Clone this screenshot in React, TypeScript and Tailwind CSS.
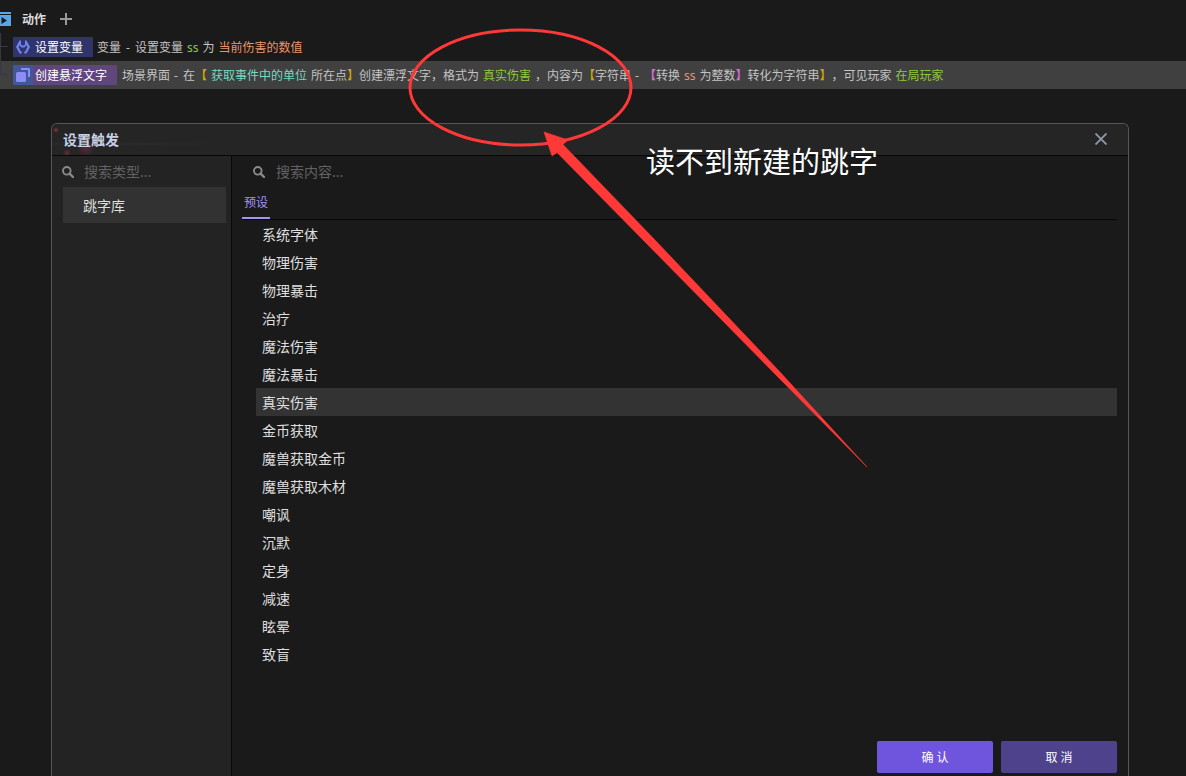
import React, { useState } from 'react';
import { clsx } from 'clsx';

const categories = ['跳字库'];

const presets = [
  '系统字体',
  '物理伤害',
  '物理暴击',
  '治疗',
  '魔法伤害',
  '魔法暴击',
  '真实伤害',
  '金币获取',
  '魔兽获取金币',
  '魔兽获取木材',
  '嘲讽',
  '沉默',
  '定身',
  '减速',
  '眩晕',
  '致盲',
];

function SearchIcon() {
  return (
    <svg viewBox="0 0 12 12" className="h-3 w-3 shrink-0" fill="none" stroke="#8a8a8a" aria-hidden="true">
      <circle cx="4.8" cy="4.8" r="3.8" strokeWidth="1.9" />
      <path d="M7.6 7.6 11 11" strokeWidth="2.4" strokeLinecap="round" />
    </svg>
  );
}

function Branch({ last }: { last?: boolean }) {
  return (
    <span className="flex w-[13px] shrink-0 flex-col self-stretch">
      <span className="h-[14px] w-2 border-b border-l border-[#343a40]" />
      <span className={clsx('flex-1', !last && 'border-l border-[#343a40]')} />
    </span>
  );
}

function ActionHeader() {
  return (
    <div className="flex h-[33px] items-center pt-[5px]">
      <svg viewBox="0 0 11 14" className="h-[14px] w-[11px]" aria-hidden="true">
        <path d="M0 0h11v2H0zM0 3h11v11H0z" fill="#58a6e8" />
        <path d="M1.5 5v7L7 8.5z" fill="#1a1a1a" />
      </svg>
      <h2 className="ml-[11px] pt-[2px] text-xs font-bold text-[#dcdcdc]">动作</h2>
      <button type="button" aria-label="添加动作" className="ml-[14px]">
        <svg viewBox="0 0 12 12" className="h-3 w-3" aria-hidden="true">
          <path d="M6 0v12M0 6h12" stroke="#9a9a9a" strokeWidth="2" />
        </svg>
      </button>
    </div>
  );
}

function SetVariableRow() {
  return (
    <div className="flex h-7 items-center whitespace-nowrap text-xs text-[#c4c4c4]">
      <Branch />
      <span className="flex h-5 items-center bg-[#2f3569] pr-[10px] text-white">
        <svg viewBox="0 0 16 16" className="ml-[2px] mr-1 h-4 w-4" fill="#7283f0" aria-hidden="true">
          <path d="M4.500 1.500H6v4l1 1h2l1-1v-4h1.500L15 8l-3.500 6.500H9.300v-2h.9L12.400 8l-1-1.800L9.500 8.500h-3L4.600 6.200 3.600 8l2.200 4.500h.9v2H4.500L1 8z" />
        </svg>
        <span className="pt-[2px]">设置变量</span>
      </span>
      <span className="flex pt-[2px]">
        <span className="ml-1">变量</span>
        <span className="mx-[5px]">-</span>
        <span>设置变量</span>
        <span className="mx-1 text-[#8fc93a]">ss</span>
        <span>为</span>
        <span className="ml-1 text-[#e8956a]">当前伤害的数值</span>
      </span>
    </div>
  );
}

function FloatingTextRow() {
  return (
    <div className="flex h-7 items-center whitespace-nowrap bg-[#404040] text-xs text-[#c4c4c4]">
      <Branch last />
      <span className="flex h-5 items-center bg-[#60457f] pr-[10px] text-white">
        <span className="mr-[2px] flex h-5 w-5 items-center justify-center bg-[#43569a]">
          <svg viewBox="0 0 14 14" className="h-[14px] w-[14px]" fill="#8c8cf5" aria-hidden="true">
            <rect x="0" y="4" width="10" height="10" rx="1.5" />
            <path d="M5 0h7.500A1.500 1.500 0 0 1 14 1.500V9h-2V2H5z" />
          </svg>
        </span>
        <span className="pt-[2px]">创建悬浮文字</span>
      </span>
      <span className="flex pt-[2px]">
        <span className="ml-[5px]">场景界面</span>
        <span className="ml-1 mr-[5px]">-</span>
        <span>在</span>
        <span className="font-bold text-[#c9a800]">【</span>
        <span className="mx-1 text-[#6fdcc4]">获取事件中的单位</span>
        <span>所在点</span>
        <span className="font-bold text-[#c9a800]">】</span>
        <span>创建漂浮文字，格式为</span>
        <span className="mx-1 text-[#8fc93a]">真实伤害</span>
        <span>，内容为</span>
        <span className="font-bold text-[#c9a800]">【</span>
        <span>字符串</span>
        <span className="ml-1 mr-[5px]">-</span>
        <span className="font-bold text-[#d670d6]">【</span>
        <span>转换</span>
        <span className="mx-1 text-[#e8956a]">ss</span>
        <span>为整数</span>
        <span className="font-bold text-[#d670d6]">】</span>
        <span>转化为字符串</span>
        <span className="font-bold text-[#c9a800]">】</span>
        <span>，可见玩家</span>
        <span className="ml-1 text-[#8fc93a]">在局玩家</span>
      </span>
    </div>
  );
}

function DialogHeader() {
  return (
    <header className="flex h-8 items-center justify-between rounded-t-md border-b border-[#080808] bg-[#252525] bg-[radial-gradient(circle_at_4px_6px,#8a3448_0,transparent_3px),radial-gradient(circle_at_15px_29px,#6b2b3c_0,transparent_4px),radial-gradient(circle_at_34px_24px,#57283a_0,transparent_9px),radial-gradient(ellipse_at_60px_20px,#2b2a30_0,transparent_110px)] pl-[11px] pr-[21px]">
      <h1 className="text-sm font-bold text-[#c8d0e6]">设置触发</h1>
      <button type="button" aria-label="关闭" className="mb-[2px]">
        <svg viewBox="0 0 12 12" className="h-3 w-3" aria-hidden="true">
          <path d="M.5.5l11 11M11.5.5l-11 11" stroke="#9299ad" strokeWidth="1.8" />
        </svg>
      </button>
    </header>
  );
}

function PickerDialog() {
  const [category, setCategory] = useState('跳字库');
  const [selected, setSelected] = useState('真实伤害');

  return (
    <section
      role="dialog"
      aria-label="设置触发"
      className="ml-[51px] mr-[57px] mt-[34px] flex flex-1 flex-col rounded-t-md border border-b-0 border-[#555]"
    >
      <DialogHeader />
      <div className="flex flex-1">
        <aside className="w-[180px] shrink-0 border-r border-[#080808] bg-[#232323]">
          <label className="flex h-[31px] items-center gap-[10px] pl-[10px]">
            <SearchIcon />
            <input
              aria-label="搜索类型"
              placeholder="搜索类型..."
              className="w-full min-w-0 bg-transparent text-sm outline-none placeholder:text-[#626262]"
            />
          </label>
          <ul className="pl-[11px] pr-[5px]">
            {categories.map((name) => (
              <li key={name}>
                <button
                  type="button"
                  onClick={() => setCategory(name)}
                  className={clsx('h-9 w-full pl-5 pt-[2px] text-left text-sm text-[#dedede]', name === category && 'bg-[#323232]')}
                >
                  {name}
                </button>
              </li>
            ))}
          </ul>
        </aside>

        <div className="flex flex-1 flex-col pl-[10px] pr-[11px]">
          <label className="flex h-8 items-center gap-[11px] pl-[11px]">
            <SearchIcon />
            <input
              aria-label="搜索内容"
              placeholder="搜索内容..."
              className="w-full min-w-0 bg-transparent text-sm outline-none placeholder:text-[#626262]"
            />
          </label>
          <div role="tablist" className="flex h-8 border-b border-[#080808]">
            <button
              type="button"
              role="tab"
              aria-selected="true"
              className="h-[31px] border-b-2 border-[#a594f5] px-[2px] text-xs text-[#a594f5]"
            >
              预设
            </button>
          </div>
          <ul className="pl-[14px]">
            {presets.map((name) => (
              <li key={name}>
                <button
                  type="button"
                  onClick={() => setSelected(name)}
                  className={clsx('h-7 w-full pl-[6px] pt-[2px] text-left text-sm text-[#dedede]', name === selected && 'bg-[#333333]')}
                >
                  {name}
                </button>
              </li>
            ))}
          </ul>
          <footer className="mt-auto flex justify-end gap-2 pb-[3px]">
            <button type="button" className="h-8 w-[116px] rounded-xs bg-[#6f55dd] pt-[2px] text-xs text-white">
              确 认
            </button>
            <button type="button" className="h-8 w-[116px] rounded-xs bg-[#4f428c] pt-[2px] text-xs text-white">
              取 消
            </button>
          </footer>
        </div>
      </div>
    </section>
  );
}

// Hand-drawn markup that sits over the editor
function Annotation() {
  return (
    <div className="pointer-events-none absolute left-0 top-0">
      <svg width="880" height="480" viewBox="0 0 880 480" aria-hidden="true">
        <ellipse cx="520.5" cy="87.5" rx="110.5" ry="57.5" fill="none" stroke="#ff3838" strokeWidth="3" />
        <path
          d="M544 132l24 8-5 4.500L655 240 780 372 867 467 775 374 648 245 557 152.500l-5 3.500z"
          fill="#ff3838"
          stroke="#ff3838"
          strokeWidth="0.6"
        />
      </svg>
      <p className="absolute left-[646px] top-[144px] whitespace-nowrap text-[29px] leading-9 text-white">读不到新建的跳字</p>
    </div>
  );
}

export default function App() {
  return (
    <main className="relative flex min-h-screen flex-col overflow-hidden bg-[#1a1a1a] font-['Noto_Sans','Noto_Sans_CJK_SC',sans-serif]">
      <ActionHeader />
      <SetVariableRow />
      <FloatingTextRow />
      <PickerDialog />
      <Annotation />
    </main>
  );
}
